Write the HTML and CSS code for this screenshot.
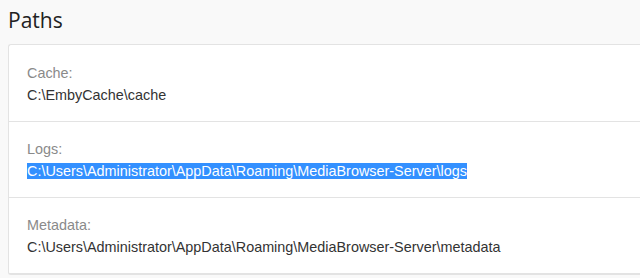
FILE: index.html
```html
<!DOCTYPE html>
<html lang="en">
<head>
    <meta charset="UTF-8">
    <meta name="viewport" content="width=device-width, initial-scale=1.0">
    <title>Paths</title>
    <link rel="stylesheet" href="styles.css">
</head>
<body>

    <h2 class="section-title">Paths</h2>

    <!-- Server paths list -->
    <div class="paths-card">
        <div class="path-row">
            <div class="path-label">Cache:</div>
            <div class="path-value">C:\EmbyCache\cache</div>
        </div>
        <div class="path-row">
            <div class="path-label">Logs:</div>
            <div class="path-value"><span class="selected">C:\Users\Administrator\AppData\Roaming\MediaBrowser-Server\logs</span></div>
        </div>
        <div class="path-row">
            <div class="path-label">Metadata:</div>
            <div class="path-value">C:\Users\Administrator\AppData\Roaming\MediaBrowser-Server\metadata</div>
        </div>
    </div>

</body>
</html>
```

FILE: styles.css
```css
/* General styling */
body {
    margin: 0;
    padding: 0 0 0 8px;
    background-color: #f9f9f9;
    font-family: "Liberation Sans", Arial, sans-serif;
    color: #333;
    overflow: hidden;
}

.section-title {
    margin: 0;
    padding: 2px 0 0 0;
    height: 42px;
    font-family: "Open Sans", "Noto Sans", sans-serif;
    font-size: 21px;
    font-weight: 400;
    line-height: 36px;
    color: #222;
}

/* Paths card */
.paths-card {
    background-color: #fff;
    border: 1px solid #e3e3e3;
    border-right: none;
    border-radius: 3px 0 0 3px;
    margin-right: -10px;
    padding-top: 1px;
}

.path-row {
    padding: 16px 18px 15px;
    border-bottom: 1px solid #e3e3e3;
}

.path-label {
    font-size: 14.4px;
    line-height: 22px;
    color: #8a8a8a;
}

.path-value {
    font-size: 14.4px;
    line-height: 22px;
    color: #333;
    white-space: nowrap;
}

.selected {
    background-color: #3390ff;
    color: #fff;
}
```
